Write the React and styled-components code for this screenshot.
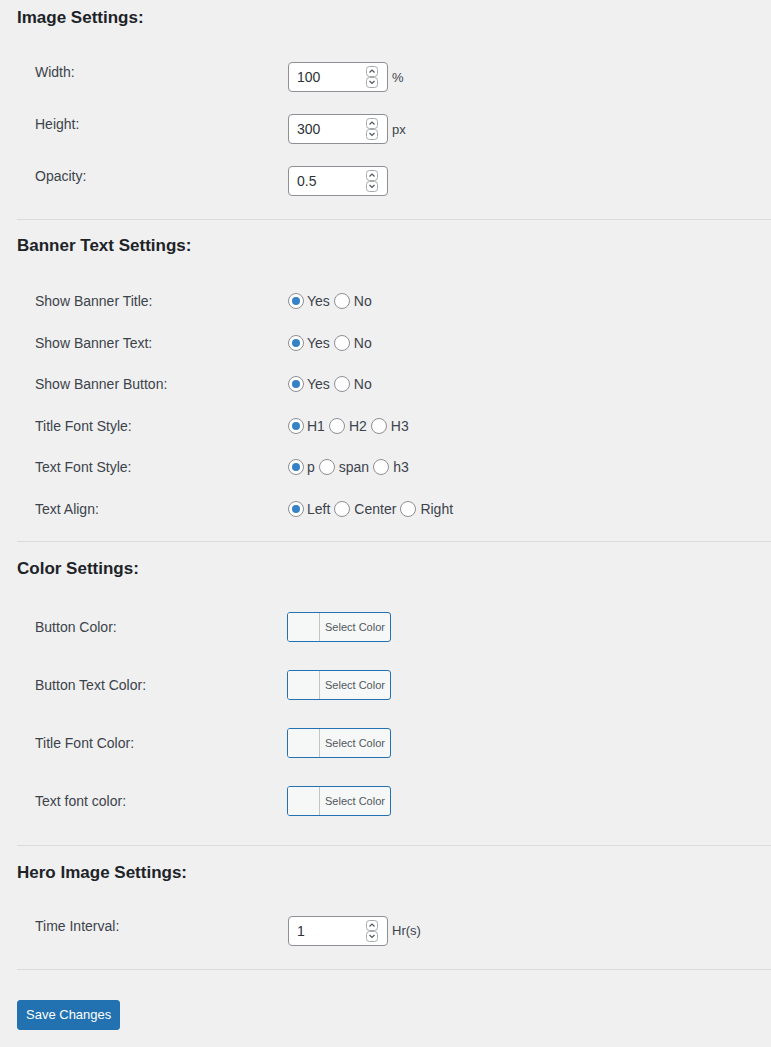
import styled, { createGlobalStyle } from 'styled-components'
import { useState } from 'react'

const Global = createGlobalStyle`
    html, body {
        margin: 0;
        background: #f0f0f1;
    }
    body {
        font-family: "Liberation Sans", Arial, sans-serif;
        color: #3c434a;
        font-size: 14px;
    }
`

const Page = styled.form`
    padding: 7px 0 18px 17px;
    overflow: hidden;
`

const Heading = styled.h2`
    margin: 0 0 ${props => props.$gap}px;
    font-size: 17px;
    line-height: 22px;
    font-weight: 700;
    color: #1d2327;
`

const Divider = styled.hr`
    border: 0;
    border-top: 1px solid #dcdcde;
    margin: ${props => props.$top}px 0 ${props => props.$bottom}px;
`

const Row = styled.div`
    display: flex;
    align-items: flex-start;
    padding: ${props => props.$pad};
    padding-left: 18px;
`

const Label = styled.div`
    width: 253px;
    flex-shrink: 0;
    line-height: 20px;
    padding-top: ${props => props.$offset || 0}px;
    color: #3c434a;
`

const Field = styled.div`
    display: flex;
    align-items: center;
    gap: 4px;
    min-height: 20px;
`

const InputWrap = styled.div`
    position: relative;
    width: 100px;
    height: 30px;
`

const NumberInput = styled.input`
    box-sizing: border-box;
    width: 100%;
    height: 100%;
    padding: 0 26px 0 8px;
    border: 1px solid #8c8f94;
    border-radius: 4px;
    background: #fff;
    color: #2c3338;
    font-family: "Liberation Sans", Arial, sans-serif;
    font-size: 14px;
    outline: none;
    appearance: textfield;
    -moz-appearance: textfield;
    &::-webkit-inner-spin-button,
    &::-webkit-outer-spin-button {
        -webkit-appearance: none;
        margin: 0;
    }
`

const Spinner = styled.svg`
    position: absolute;
    top: 4px;
    right: 10px;
    cursor: pointer;
`

const Unit = styled.span`
    font-size: 13px;
    color: #3c434a;
`

const Options = styled.div`
    display: flex;
    align-items: center;
    line-height: 20px;
`

const Option = styled.label`
    display: flex;
    align-items: center;
    margin-right: 4px;
    white-space: pre;
    cursor: pointer;
`

const Radio = styled.input`
    appearance: none;
    box-sizing: border-box;
    width: 16px;
    height: 16px;
    margin: 0 ${props => props.$space}px 0 0;
    border: 1px solid #8c8f94;
    border-radius: 50%;
    background: #fff;
    display: grid;
    place-items: center;
    &:checked::before {
        content: '';
        width: 8px;
        height: 8px;
        border-radius: 50%;
        background: #3582c4;
    }
`

const ColorButton = styled.button`
    box-sizing: border-box;
    display: flex;
    align-items: stretch;
    width: 104px;
    height: 30px;
    margin-left: -1px;
    padding: 0;
    border: 1px solid #2271b1;
    border-radius: 3px;
    background: #f6f7f7;
    overflow: hidden;
    cursor: pointer;
`

const Swatch = styled.span`
    width: 31px;
    border-right: 1px solid #c3c4c7;
    background: #f6f7f7;
`

const ColorText = styled.span`
    flex: 1;
    display: flex;
    align-items: center;
    padding-left: 5px;
    font-family: "Liberation Sans", Arial, sans-serif;
    font-size: 11px;
    color: #50575e;
`

const SaveButton = styled.button`
    box-sizing: border-box;
    height: 30px;
    padding: 0 8px;
    border: 1px solid #2271b1;
    border-radius: 3px;
    background: #2271b1;
    color: #fff;
    font-family: "Liberation Sans", Arial, sans-serif;
    font-size: 13px;
    cursor: pointer;
`

const radioRows = [
    { label: 'Show Banner Title:', name: 'title', options: ['Yes', 'No'] },
    { label: 'Show Banner Text:', name: 'text', options: ['Yes', 'No'] },
    { label: 'Show Banner Button:', name: 'button', options: ['Yes', 'No'] },
    { label: 'Title Font Style:', name: 'titleFont', options: ['H1', 'H2', 'H3'] },
    { label: 'Text Font Style:', name: 'textFont', options: ['p', 'span', 'h3'] },
    { label: 'Text Align:', name: 'align', options: ['Left', 'Center', 'Right'] },
]

const colorRows = ['Button Color:', 'Button Text Color:', 'Title Font Color:', 'Text font color:']

function SpinIcon({ onUp, onDown }) {
    return (
        <Spinner width="12" height="22" viewBox="0 0 12 22">
            <g onClick={onUp}>
                <rect x="0.5" y="0.5" width="11" height="10" rx="3" fill="#fff" stroke="#a7aaad" />
                <path d="M3.5 6.5 L6 4 L8.5 6.5" fill="none" stroke="#50575e" strokeWidth="1.2" />
            </g>
            <g onClick={onDown}>
                <rect x="0.5" y="11.5" width="11" height="10" rx="3" fill="#fff" stroke="#a7aaad" />
                <path d="M3.5 15 L6 17.5 L8.5 15" fill="none" stroke="#50575e" strokeWidth="1.2" />
            </g>
        </Spinner>
    )
}

function NumberRow({ label, value, step = 1, unit }) {
    const [val, setVal] = useState(value)
    const bump = dir => setVal(v => String(Math.round((Number(v) + dir * step) * 10) / 10))
    return (
        <Row $pad="11px 0">
            <Label>{label}</Label>
            <Field>
                <InputWrap>
                    <NumberInput type="number" step={step} value={val} onChange={e => setVal(e.target.value)} />
                    <SpinIcon onUp={() => bump(1)} onDown={() => bump(-1)} />
                </InputWrap>
                {unit && <Unit>{unit}</Unit>}
            </Field>
        </Row>
    )
}

function RadioRow({ label, name, options }) {
    const [picked, setPicked] = useState(options[0])
    return (
        <Row $pad="11px 0 10.6px">
            <Label>{label}</Label>
            <Options>
                {options.map((opt, i) => (
                    <Option key={opt}>
                        <Radio
                            type="radio"
                            name={name}
                            $space={i === 0 ? 3 : 4}
                            checked={picked === opt}
                            onChange={() => setPicked(opt)}
                        />
                        {opt}
                    </Option>
                ))}
            </Options>
        </Row>
    )
}

export default function App() {
    return (
        <>
            <Global />
            <Page onSubmit={e => e.preventDefault()}>
                <Heading $gap={22}>Image Settings:</Heading>
                <NumberRow label="Width:" value="100" unit="%" />
                <NumberRow label="Height:" value="300" unit="px" />
                <NumberRow label="Opacity:" value="0.5" step={0.1} />
                <Divider $top={12} $bottom={15} />

                <Heading $gap={23}>Banner Text Settings:</Heading>
                {radioRows.map(r => <RadioRow key={r.name} {...r} />)}
                <Divider $top={11} $bottom={16} />

                <Heading $gap={21}>Color Settings:</Heading>
                {colorRows.map(label => (
                    <Row key={label} $pad="11px 0 17px">
                        <Label $offset={5}>{label}</Label>
                        <ColorButton type="button">
                            <Swatch />
                            <ColorText>Select Color</ColorText>
                        </ColorButton>
                    </Row>
                ))}
                <Divider $top={12} $bottom={16} />

                <Heading $gap={21}>Hero Image Settings:</Heading>
                <NumberRow label="Time Interval:" value="1" unit="Hr(s)" />
                <Divider $top={12} $bottom={30} />

                <SaveButton type="submit">Save Changes</SaveButton>
            </Page>
        </>
    )
}
